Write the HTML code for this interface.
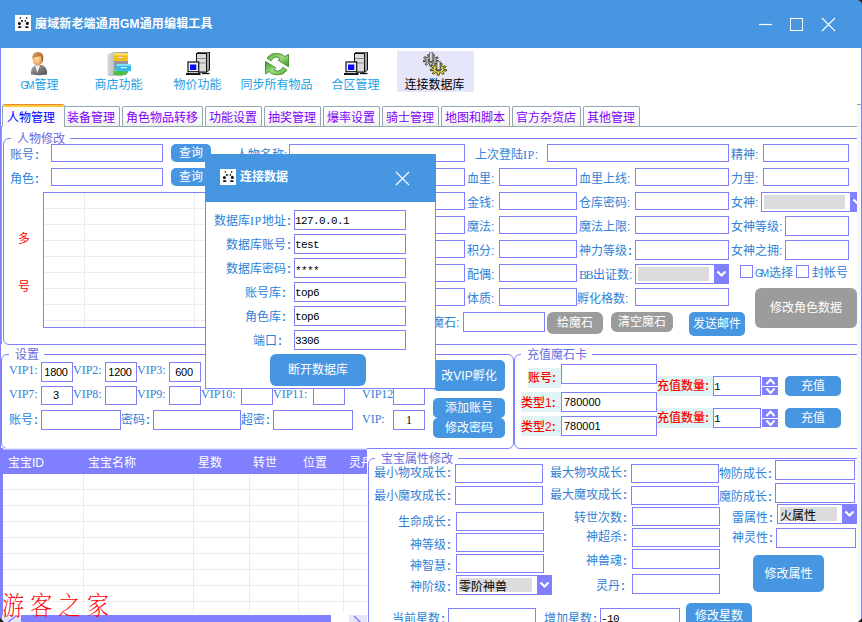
<!DOCTYPE html><html><head><meta charset="utf-8"><title>GM</title><style>
*{box-sizing:content-box;margin:0;padding:0}
html,body{width:862px;height:622px;overflow:hidden;background:#fff}
body{position:relative;font:12px/12px "Liberation Sans","Noto Sans CJK SC",sans-serif;font-weight:400}
div,span,svg{position:absolute}
.lb{color:#2f82d8;white-space:nowrap;height:12px;margin-top:1px}
.c{position:static;font-weight:700;margin-left:1px}
.n{position:static;font-family:"Liberation Serif",serif;font-size:12px;letter-spacing:-1.5px;margin-right:1px}
.g{position:static;font-size:10px;letter-spacing:-2px;margin-right:2px}
.gl{color:#6a6ae0;background:#fff;padding:0 5px 0 6px;white-space:nowrap;height:13px;line-height:13px}
.tb{box-sizing:border-box;border:1px solid #8080ff;background:#fff;color:#000;font-weight:400;white-space:nowrap;overflow:hidden}
.mono{font-family:"Liberation Mono","Noto Sans CJK SC",monospace;font-size:11px;letter-spacing:-0.6px;padding-left:0px;padding-top:1px}
.btn{background:#4696e1;color:#fff;border-radius:5px;text-align:center;white-space:nowrap}
.gbtn{background:#9c9c9c;color:#fff;border-radius:6px;text-align:center;white-space:nowrap}
.gb{border:1px solid #8080ff;border-radius:6px}
.cb{border:1px solid #8080ff;background:#fff}
.cbi{left:2px;top:2px;right:19px;bottom:2px;background:#dcdcdc;color:#000;font-weight:400;padding-left:0px;padding-top:2px;white-space:nowrap;overflow:hidden}
.cbd{right:-1px;top:-1px;bottom:-1px;width:15px;background:#8080ff}
.red{color:#f00;font-weight:500;background:#e0f4f4;white-space:nowrap}
.tab{top:106px;height:19px;border:1px solid #91a7b4;border-bottom:none;border-radius:2px 2px 0 0;background:linear-gradient(#fff,#fafaf9 60%,#f0f0ea);color:#8000ff;line-height:23px;text-align:left;padding-left:3px;white-space:nowrap;font-weight:400}
.tl{color:#1ea0e6;text-align:center;white-space:nowrap;width:77px;top:79px;font-weight:400}
.th{color:#fff;top:7px;white-space:nowrap;font-weight:400}
.vl{width:1px;background:#ececec}
.hl{height:1px;background:#ececec}
</style></head><body>
<div style="left:0;top:0;width:862px;height:48px;background:#4696e1"></div>
<svg style="left:15px;top:15px" width="16" height="16" viewBox="0 0 16 16"><rect width="16" height="16" fill="#fff"/><ellipse cx="8.500" cy="9" rx="2.500" ry="4" fill="#f3f3f8"/><ellipse cx="5.300" cy="2.900" rx=".6" ry="1" fill="#111"/><ellipse cx="11.700" cy="2.900" rx=".7" ry="1" fill="#111"/><ellipse cx="6.900" cy="5.900" rx="1.100" ry=".9" fill="#111"/><ellipse cx="10.400" cy="5.900" rx=".7" ry=".9" fill="#111"/><ellipse cx="4.400" cy="8.600" rx="1.500" ry="1.700" fill="#111"/><ellipse cx="12.400" cy="8.400" rx="1.500" ry="1.600" fill="#111"/><rect x="3" y="11.200" width="3.400" height="1.800" rx=".8" fill="#111"/><rect x="10.200" y="11.200" width="3.400" height="1.800" rx=".8" fill="#111"/></svg>
<span style="left:35px;top:18px;color:#fff;font-weight:700;white-space:nowrap;line-height:13px;letter-spacing:.15px">魔域新老端通用GM通用编辑工具</span>
<svg style="left:755px;top:14px" width="90" height="22" viewBox="0 0 90 22"><path d="M4 10.5h13" stroke="#fff" stroke-width="1.2"/><rect x="35.500" y="4.500" width="12" height="12" fill="none" stroke="#fff" stroke-width="1"/><path d="M67 4l13 13M80 4l-13 13" stroke="#fff" stroke-width="1.1"/></svg>
<svg style="left:856px;top:0" width="6" height="6" viewBox="0 0 6 6"><path d="M1 0h5v5A5 5 0 0 0 1 0z" fill="#222"/></svg>
<div style="left:0;top:48px;width:1px;height:574px;background:#8080ff"></div>
<div style="left:861px;top:48px;width:1px;height:574px;background:#8080ff"></div>
<div style="left:857px;top:105px;width:4px;height:517px;background:#f7f7fc"></div>
<div style="left:397px;top:51px;width:77px;height:41px;background:#e6e6fa"></div>
<span class="tl" style="left:1px;"><span style="position:static;font-size:10px;letter-spacing:-2px;margin-right:2px">GM</span>管理</span>
<span class="tl" style="left:80px;">商店功能</span>
<span class="tl" style="left:159px;">物价功能</span>
<span class="tl" style="left:238px;">同步所有物品</span>
<span class="tl" style="left:317px;">合区管理</span>
<span class="tl" style="left:396px;color:#000;">连接数据库</span>
<svg style="left:27px;top:52px" width="24" height="24" viewBox="0 0 24 24"><defs><radialGradient id="ug" cx=".4" cy=".45" r=".7"><stop offset="0" stop-color="#ffe2b4"/><stop offset=".6" stop-color="#f2b06a"/><stop offset="1" stop-color="#c8702a"/></radialGradient><linearGradient id="uh" x1="0" y1="0" x2="1" y2="1"><stop offset="0" stop-color="#d8a060"/><stop offset=".5" stop-color="#b87a3a"/><stop offset="1" stop-color="#8a5220"/></linearGradient><linearGradient id="ub" x1="0" y1="0" x2="1" y2="1"><stop offset="0" stop-color="#a8a8a8"/><stop offset="1" stop-color="#4e4e4e"/></linearGradient></defs><path d="M4 22.500c-.5-5 1-7.500 5-9.500h6c4 2 5.500 4.500 5 9.500q-8 1.500-16 0z" fill="url(#ub)"/><path d="M8.200 13.500l2 7.500 3-8z" fill="#f2f2f2"/><ellipse cx="10.700" cy="6.900" rx="5.200" ry="6.500" fill="url(#ug)"/><path d="M5.500 6.500c-.5-4 2-6.500 5.500-6.500 4 0 6 3 5.200 7.500-.3 1.800-.8 3-1.700 4 .6-3 .3-5.500-1-7.500-2.500 1-5.500 1-8 2.500z" fill="url(#uh)"/></svg>
<svg style="left:107px;top:52px" width="24" height="24" viewBox="0 0 24 24"><defs><linearGradient id="sg" x1="0" y1="0" x2="1" y2="0"><stop offset="0" stop-color="#d4d8dc"/><stop offset="1" stop-color="#8e959b"/></linearGradient></defs><path d="M.5 2.500l6-2.500h14.500v21l-6 3h-14.500z" fill="url(#sg)"/><rect x="7" y="8" width="14" height="10" fill="#90979d"/><rect x="6.500" y="17.500" width="13" height="5.500" fill="#4fbe3c"/><rect x="6.500" y="17.500" width="13" height="1.500" fill="#8fe07c"/><rect x="6.500" y="1.300" width="14.500" height="7.700" fill="#f6c21a"/><rect x="6.500" y="1.300" width="14.500" height="2" fill="#ffe26a"/><rect x="10.500" y="4.300" width="6.500" height="1.800" fill="#fff4c8" stroke="#b88a10" stroke-width=".4"/><rect x="9.400" y="12" width="14.600" height="7.200" fill="#2cbcf0"/><rect x="9.400" y="12" width="14.600" height="2" fill="#86e0ff"/><rect x="13.500" y="14.800" width="6.500" height="1.800" fill="#d8f6ff" stroke="#1a86b4" stroke-width=".4"/></svg>
<svg style="left:186px;top:52px" width="24" height="24" viewBox="0 0 24 24"><path d="M10.500 1.500l3-1.500h10v18l-3 2h-10z" fill="#a0a0a0" stroke="#111" stroke-width="1"/><rect x="10.500" y="1.500" width="10" height="18.500" fill="#dadada" stroke="#111" stroke-width="1"/><path d="M11 6.500h9.500M11 11h9.500" stroke="#8a8a8a" stroke-width="1"/><rect x="2" y="10" width="10.700" height="9.700" fill="#f2f2f2" stroke="#111" stroke-width="1.200"/><rect x="4" y="12.500" width="6.300" height="5.500" fill="#0a0aff"/><path d="M0 22h14.500" stroke="#111" stroke-width="2"/><rect x="3" y="19.700" width="9" height="1.600" fill="#c8c8c8" stroke="#111" stroke-width=".6"/><path d="M16 21.500h7.500" stroke="#111" stroke-width="1.300"/></svg>
<svg style="left:265px;top:52px" width="24" height="24" viewBox="0 0 24 24"><defs><linearGradient id="yg" x1="0" y1="0" x2="1" y2="1"><stop offset="0" stop-color="#57b23a"/><stop offset=".5" stop-color="#9cdc80"/><stop offset="1" stop-color="#3c9626"/></linearGradient></defs><g fill="url(#yg)" stroke="#2e7d1a" stroke-width=".8" stroke-linejoin="round"><path id="ya" d="M2 6Q6 1 11.500 1.400Q15 1.500 17.600 2.800L19.700 4.600L23.500 2.300V14.700L13.100 8.200L15.200 6.500Q13 5 10.500 5.100Q8 5.300 6.100 8.900Z"/><use href="#ya" transform="rotate(180 12 12.100)"/></g></svg>
<svg style="left:344px;top:52px" width="24" height="24" viewBox="0 0 24 24"><path d="M10.500 1.500l3-1.500h10v18l-3 2h-10z" fill="#a0a0a0" stroke="#111" stroke-width="1"/><rect x="10.500" y="1.500" width="10" height="18.500" fill="#dadada" stroke="#111" stroke-width="1"/><path d="M11 6.500h9.500M11 11h9.500" stroke="#8a8a8a" stroke-width="1"/><rect x="2" y="10" width="10.700" height="9.700" fill="#f2f2f2" stroke="#111" stroke-width="1.200"/><rect x="4" y="12.500" width="6.300" height="5.500" fill="#0a0aff"/><path d="M0 22h14.500" stroke="#111" stroke-width="2"/><rect x="3" y="19.700" width="9" height="1.600" fill="#c8c8c8" stroke="#111" stroke-width=".6"/><path d="M16 21.500h7.500" stroke="#111" stroke-width="1.300"/></svg>
<svg style="left:423px;top:52px" width="24" height="24" viewBox="0 0 24 24"><path d="M12.9 8.3 L15.9 8.8 L15.5 10.2 L12.5 9.8 L11.7 10.7 L13.6 12.5 L12.1 13.4 L10.1 11.6 L8.8 12.0 L8.6 14.3 L6.8 14.2 L6.7 11.9 L5.5 11.5 L3.4 13.2 L1.9 12.3 L3.9 10.5 L3.3 9.6 L0.2 9.9 L-0.1 8.5 L2.9 8.1 L3.2 7.1 L0.6 5.8 L1.6 4.6 L4.3 5.7 L5.4 5.1 L4.5 2.9 L6.3 2.4 L7.3 4.6 L8.7 4.6 L9.9 2.5 L11.7 3.0 L10.6 5.2 L11.7 5.9 L14.4 4.8 L15.3 6.1 L12.7 7.2Z" fill="#c4c4c4" stroke="#3a3a3a" stroke-width="0.9" stroke-linejoin="round"/><ellipse cx="7.900" cy="8.500" rx="3.200" ry="2.300" fill="#555"/><defs><linearGradient id="sh" x1="0" y1="0" x2="1" y2="0"><stop offset="0" stop-color="#7a7a7a"/><stop offset=".4" stop-color="#f4f4f4"/><stop offset="1" stop-color="#6a6a6a"/></linearGradient></defs><rect x="6.200" y="0.300" width="4" height="9" rx="1.200" fill="url(#sh)" stroke="#444" stroke-width=".5"/><path d="M20.5 17.2 L23.7 17.7 L23.3 19.1 L20.1 18.7 L19.4 19.6 L21.3 21.5 L19.8 22.4 L17.7 20.6 L16.3 20.9 L16.2 23.3 L14.2 23.2 L14.2 20.9 L12.9 20.5 L10.7 22.2 L9.2 21.3 L11.3 19.5 L10.6 18.5 L7.4 18.8 L7.1 17.4 L10.3 17.0 L10.5 15.9 L7.9 14.7 L8.9 13.4 L11.7 14.6 L12.8 13.9 L11.8 11.7 L13.7 11.2 L14.8 13.4 L16.2 13.5 L17.5 11.3 L19.3 11.8 L18.2 14.0 L19.3 14.7 L22.2 13.7 L23.1 14.9 L20.3 16.1Z" fill="#f2e640" stroke="#3a3408" stroke-width="0.9" stroke-linejoin="round"/><ellipse cx="15.400" cy="17.300" rx="3.200" ry="2.300" fill="#555"/><rect x="13.700" y="9.200" width="4" height="8.500" rx="1.200" fill="url(#sh)" stroke="#444" stroke-width=".5"/></svg>
<div style="left:1px;top:126px;width:856px;height:1px;background:#91a7b4"></div>
<div style="left:1px;top:126px;width:1px;height:218px;background:#91a7b4"></div>
<div style="left:857px;top:104px;width:5px;height:1px;background:#91a7b4"></div>
<div class="tab" style="left:63px;width:52px">装备管理</div>
<div class="tab" style="left:122px;width:76px">角色物品转移</div>
<div class="tab" style="left:205px;width:52px">功能设置</div>
<div class="tab" style="left:264px;width:52px">抽奖管理</div>
<div class="tab" style="left:323px;width:52px">爆率设置</div>
<div class="tab" style="left:382px;width:52px">骑士管理</div>
<div class="tab" style="left:441px;width:64px">地图和脚本</div>
<div class="tab" style="left:512px;width:64px">官方杂货店</div>
<div class="tab" style="left:583px;width:52px">其他管理</div>
<div style="left:2px;top:104px;width:61px;height:23px;border:1px solid #91a7b4;border-bottom:none;border-top:none;background:#fcfcfe;border-radius:3px 3px 0 0;overflow:hidden"><div style="left:0;top:0;width:61px;height:1px;background:#e68b2c"></div><div style="left:0;top:1px;width:61px;height:2px;background:#ffc73c"></div><span style="left:4px;top:8px;color:#0000ff;white-space:nowrap;font-weight:400">人物管理</span></div>
<div id="pg" style="left:1px;top:127px;width:856px;height:495px;overflow:hidden">
<div style="left:-1px;top:-127px;width:862px;height:622px">
<div class="gb" style="left:3px;top:138px;width:869px;height:205px;"></div>
<span class="gl" style="left:11px;top:133px;">人物修改</span>
<span class="lb" style="left:10px;top:148px;">账号<b class="c">:</b></span>
<div class="tb" style="left:51px;top:144px;width:112px;height:18px;line-height:16px;"></div>
<div class="btn" style="left:171px;top:144px;width:40px;height:18px;line-height:19px;">查询</div>
<span class="lb" style="left:236px;top:148px;">人物名称:</span>
<div class="tb" style="left:289px;top:144px;width:176px;height:18px;line-height:16px;"></div>
<span class="lb" style="left:475px;top:148px;">上次登陆<span class="n" style="letter-spacing:.6px;margin-right:0">IP</span>:</span>
<div class="tb" style="left:547px;top:144px;width:182px;height:18px;line-height:16px;"></div>
<span class="lb" style="left:731px;top:148px;">精神:</span>
<div class="tb" style="left:763px;top:144px;width:86px;height:18px;line-height:16px;"></div>
<span class="lb" style="left:10px;top:172px;">角色<b class="c">:</b></span>
<div class="tb" style="left:51px;top:168px;width:112px;height:18px;line-height:16px;"></div>
<div class="btn" style="left:171px;top:168px;width:40px;height:18px;line-height:19px;">查询</div>
<div class="tb" style="left:289px;top:168px;width:176px;height:18px;line-height:16px;"></div>
<div class="tb" style="left:289px;top:192px;width:176px;height:18px;line-height:16px;"></div>
<div class="tb" style="left:289px;top:216px;width:176px;height:18px;line-height:16px;"></div>
<div class="tb" style="left:289px;top:240px;width:176px;height:18px;line-height:16px;"></div>
<div class="tb" style="left:289px;top:264px;width:176px;height:18px;line-height:16px;"></div>
<div class="tb" style="left:289px;top:288px;width:176px;height:18px;line-height:16px;"></div>
<span class="lb" style="left:467px;top:172px;">血里:</span>
<div class="tb" style="left:499px;top:168px;width:78px;height:18px;line-height:16px;"></div>
<span class="lb" style="left:579px;top:172px;">血里上线:</span>
<div class="tb" style="left:635px;top:168px;width:94px;height:18px;line-height:16px;"></div>
<span class="lb" style="left:467px;top:196px;">金钱:</span>
<div class="tb" style="left:499px;top:192px;width:78px;height:18px;line-height:16px;"></div>
<span class="lb" style="left:579px;top:196px;">仓库密码:</span>
<div class="tb" style="left:635px;top:192px;width:94px;height:18px;line-height:16px;"></div>
<span class="lb" style="left:467px;top:220px;">魔法:</span>
<div class="tb" style="left:499px;top:216px;width:78px;height:18px;line-height:16px;"></div>
<span class="lb" style="left:579px;top:220px;">魔法上限:</span>
<div class="tb" style="left:635px;top:216px;width:94px;height:18px;line-height:16px;"></div>
<span class="lb" style="left:467px;top:244px;">积分:</span>
<div class="tb" style="left:499px;top:240px;width:78px;height:18px;line-height:16px;"></div>
<span class="lb" style="left:579px;top:244px;">神力等级<b class="c">:</b></span>
<div class="tb" style="left:635px;top:240px;width:94px;height:20px;line-height:18px;"></div>
<span class="lb" style="left:467px;top:268px;">配偶:</span>
<div class="tb" style="left:499px;top:264px;width:78px;height:18px;line-height:16px;"></div>
<span class="lb" style="left:579px;top:268px;"><span class="n">BB</span>出证数:</span>
<span class="lb" style="left:467px;top:292px;">体质:</span>
<div class="tb" style="left:499px;top:288px;width:78px;height:18px;line-height:16px;"></div>
<span class="lb" style="left:577px;top:292px;">孵化格数:</span>
<div class="tb" style="left:635px;top:288px;width:94px;height:18px;line-height:16px;"></div>
<div class="cb" style="left:635px;top:264px;width:92px;height:18px;"><div class="cbi" style="line-height:14px"></div><div class="cbd"><svg width="15" height="20" viewBox="0 0 15 20"><path d="M3.500 7.5 L7.500 11.5 L11.500 7.5" fill="none" stroke="#fff" stroke-width="2.200"/></svg></div></div>
<span class="lb" style="left:731px;top:172px;">力里:</span>
<div class="tb" style="left:763px;top:168px;width:86px;height:18px;line-height:16px;"></div>
<span class="lb" style="left:731px;top:196px;">女神:</span>
<div class="cb" style="left:761px;top:192px;width:102px;height:18px;"><div class="cbi" style="line-height:14px"></div><div class="cbd"><svg width="15" height="20" viewBox="0 0 15 20"><path d="M3.500 7.5 L7.500 11.5 L11.500 7.5" fill="none" stroke="#fff" stroke-width="2.200"/></svg></div></div>
<span class="lb" style="left:731px;top:220px;">女神等级:</span>
<div class="tb" style="left:785px;top:216px;width:64px;height:20px;line-height:18px;"></div>
<span class="lb" style="left:731px;top:244px;">女神之拥:</span>
<div class="tb" style="left:785px;top:240px;width:64px;height:20px;line-height:18px;"></div>
<div class="tb" style="left:740px;top:265px;width:13px;height:13px;line-height:11px;"></div>
<span class="lb" style="left:755px;top:266px;"><span class="g">GM</span>选择</span>
<div class="tb" style="left:796px;top:265px;width:13px;height:13px;line-height:11px;"></div>
<span class="lb" style="left:812px;top:266px;">封帐号</span>
<div class="gbtn" style="left:755px;top:288px;width:102px;height:40px;line-height:41px;">修改角色数据</div>
<span class="lb" style="left:432px;top:316px;">魔石:</span>
<div class="tb" style="left:463px;top:312px;width:82px;height:20px;line-height:18px;"></div>
<div class="gbtn" style="left:547px;top:312px;width:56px;height:22px;line-height:23px;">给魔石</div>
<div class="gbtn" style="left:611px;top:312px;width:62px;height:20px;line-height:21px;">清空魔石</div>
<div class="btn" style="left:689px;top:312px;width:56px;height:24px;line-height:25px;">发送邮件</div>
<div class="tb" style="left:43px;top:192px;width:232px;height:136px;">
<div class="hl" style="left:0;top:15px;width:230px"></div>
<div class="hl" style="left:0;top:31px;width:230px"></div>
<div class="hl" style="left:0;top:47px;width:230px"></div>
<div class="hl" style="left:0;top:63px;width:230px"></div>
<div class="hl" style="left:0;top:79px;width:230px"></div>
<div class="hl" style="left:0;top:95px;width:230px"></div>
<div class="hl" style="left:0;top:111px;width:230px"></div>
<div class="hl" style="left:0;top:127px;width:230px"></div>
<div class="vl" style="left:40px;top:0;height:134px"></div>
<div class="vl" style="left:150px;top:0;height:134px"></div>
</div>
<span class="lb" style="left:18px;top:232px;color:#f00;font-weight:400">多</span>
<span class="lb" style="left:18px;top:280px;color:#f00;font-weight:400">号</span>
<div class="gb" style="left:1px;top:354px;width:511px;height:93px;"></div>
<span class="gl" style="left:9px;top:349px;">设置</span>
<span class="lb" style="left:9px;top:363px;font-family:'Liberation Serif',serif">VIP1:</span>
<div class="tb" style="left:41px;top:362px;width:32px;height:20px;line-height:18px;text-align:center;font-size:11px;letter-spacing:-0.3px;padding-right:2px">1800</div>
<span class="lb" style="left:73px;top:363px;font-family:'Liberation Serif',serif">VIP2:</span>
<div class="tb" style="left:105px;top:362px;width:32px;height:20px;line-height:18px;text-align:center;font-size:11px;letter-spacing:-0.3px;padding-right:2px">1200</div>
<span class="lb" style="left:137px;top:363px;font-family:'Liberation Serif',serif">VIP3:</span>
<div class="tb" style="left:169px;top:362px;width:32px;height:20px;line-height:18px;text-align:center;font-size:11px;letter-spacing:-0.3px;padding-right:2px">600</div>
<span class="lb" style="left:9px;top:387px;font-family:'Liberation Serif',serif">VIP7:</span>
<div class="tb" style="left:41px;top:386px;width:32px;height:19px;line-height:17px;text-align:center;font-size:11px;letter-spacing:-0.3px;padding-right:2px">3</div>
<span class="lb" style="left:73px;top:387px;font-family:'Liberation Serif',serif">VIP8:</span>
<div class="tb" style="left:105px;top:386px;width:32px;height:19px;line-height:17px;text-align:center;font-size:11px;letter-spacing:-0.3px;padding-right:2px"></div>
<span class="lb" style="left:137px;top:387px;font-family:'Liberation Serif',serif">VIP9:</span>
<div class="tb" style="left:169px;top:386px;width:32px;height:19px;line-height:17px;text-align:center;font-size:11px;letter-spacing:-0.3px;padding-right:2px"></div>
<span class="lb" style="left:201px;top:387px;font-family:'Liberation Serif',serif">VIP10:</span>
<div class="tb" style="left:241px;top:386px;width:32px;height:19px;line-height:17px;text-align:center;font-size:11px;letter-spacing:-0.3px;padding-right:2px"></div>
<span class="lb" style="left:273px;top:387px;font-family:'Liberation Serif',serif">VIP11:</span>
<div class="tb" style="left:313px;top:386px;width:32px;height:19px;line-height:17px;text-align:center;font-size:11px;letter-spacing:-0.3px;padding-right:2px"></div>
<span class="lb" style="left:362px;top:387px;font-family:'Liberation Serif',serif">VIP12</span>
<div class="tb" style="left:393px;top:386px;width:32px;height:19px;line-height:17px;text-align:center;font-size:11px;letter-spacing:-0.3px;padding-right:2px"></div>
<span class="lb" style="left:9px;top:413px;">账号<b class="c">:</b></span>
<div class="tb" style="left:41px;top:410px;width:80px;height:20px;line-height:18px;"></div>
<span class="lb" style="left:121px;top:413px;">密码<b class="c">:</b></span>
<div class="tb" style="left:153px;top:410px;width:88px;height:20px;line-height:18px;"></div>
<span class="lb" style="left:241px;top:413px;">超密<b class="c">:</b></span>
<div class="tb" style="left:273px;top:410px;width:80px;height:20px;line-height:18px;"></div>
<span class="lb" style="left:362px;top:412px;font-family:'Liberation Serif',serif">VIP:</span>
<div class="tb" style="left:393px;top:410px;width:32px;height:20px;line-height:18px;text-align:center;font-family:'Liberation Serif',serif">1</div>
<div class="btn" style="left:433px;top:360px;width:72px;height:31px;line-height:32px;">改VIP孵化</div>
<div class="btn" style="left:433px;top:398px;width:72px;height:20px;line-height:21px;">添加账号</div>
<div class="btn" style="left:433px;top:418px;width:72px;height:20px;line-height:21px;">修改密码</div>
<div class="gb" style="left:514px;top:354px;width:359px;height:93px;"></div>
<span class="gl" style="left:521px;top:349px;">充值魔石卡</span>
<span class="red" style="left:528px;top:368px;height:20px;line-height:21px;width:33px">账号<b class="c" style="margin-left:0">:</b></span>
<div class="tb" style="left:561px;top:364px;width:96px;height:20px;line-height:18px;"></div>
<span class="red" style="left:521px;top:392px;height:20px;line-height:23px;width:40px">类型1<b class="c" style="margin-left:0">:</b></span>
<div class="tb" style="left:561px;top:392px;width:96px;height:20px;line-height:18px;padding-left:2px;font-size:11px">780000</div>
<span class="red" style="left:521px;top:416px;height:20px;line-height:23px;width:40px">类型2<b class="c" style="margin-left:0">:</b></span>
<div class="tb" style="left:561px;top:416px;width:96px;height:20px;line-height:18px;padding-left:2px;font-size:11px">780001</div>
<span class="red" style="left:657px;top:376px;height:20px;line-height:20px;width:56px">充值数量<b class="c" style="margin-left:0">:</b></span>
<div class="tb mono" style="left:713px;top:376px;width:48px;height:20px;line-height:18px;">1</div>
<svg style="left:762px;top:377px" width="16" height="18" viewBox="0 0 16 18"><rect width="16" height="9" fill="#8080ff"/><rect y="10" width="16" height="8" fill="#8080ff"/><path d="M4.500 7l4-4.500 4 4.500M4.500 11.500l4 4.500 4-4.500" fill="none" stroke="#fff" stroke-width="2"/></svg>
<div class="btn" style="left:785px;top:376px;width:56px;height:20px;line-height:21px;">充值</div>
<span class="red" style="left:657px;top:408px;height:20px;line-height:20px;width:56px">充值数量<b class="c" style="margin-left:0">:</b></span>
<div class="tb mono" style="left:713px;top:408px;width:48px;height:20px;line-height:18px;">1</div>
<svg style="left:762px;top:409px" width="16" height="18" viewBox="0 0 16 18"><rect width="16" height="9" fill="#8080ff"/><rect y="10" width="16" height="8" fill="#8080ff"/><path d="M4.500 7l4-4.500 4 4.500M4.500 11.500l4 4.500 4-4.500" fill="none" stroke="#fff" stroke-width="2"/></svg>
<div class="btn" style="left:785px;top:408px;width:56px;height:20px;line-height:21px;">充值</div>
<div style="left:2px;top:448px;width:365px;height:1px;background:#e4e4ff"></div><div style="left:2px;top:449px;width:365px;height:1px;background:#b4b4ff"></div>
<div style="left:2px;top:450px;width:365px;height:24px;background:#8080ff">
<span class="th" style="left:6px">宝宝ID</span>
<span class="th" style="left:86px">宝宝名称</span>
<span class="th" style="left:196px">星数</span>
<span class="th" style="left:251px">转世</span>
<span class="th" style="left:301px">位置</span>
<span class="th" style="left:347px">灵丹</span>
</div>
<div class="hl" style="left:3px;top:489px;width:364px"></div>
<div class="hl" style="left:3px;top:505px;width:364px"></div>
<div class="hl" style="left:3px;top:521px;width:364px"></div>
<div class="hl" style="left:3px;top:537px;width:364px"></div>
<div class="hl" style="left:3px;top:553px;width:364px"></div>
<div class="hl" style="left:3px;top:569px;width:364px"></div>
<div class="hl" style="left:3px;top:585px;width:364px"></div>
<div class="hl" style="left:3px;top:601px;width:364px"></div>
<div class="vl" style="left:83px;top:474px;height:139px"></div>
<div class="vl" style="left:193px;top:474px;height:139px"></div>
<div class="vl" style="left:249px;top:474px;height:139px"></div>
<div class="vl" style="left:298px;top:474px;height:139px"></div>
<div class="vl" style="left:343px;top:474px;height:139px"></div>
<div style="left:1px;top:448px;width:2px;height:174px;background:#8080ff"></div>
<div style="left:2px;top:615px;width:19px;height:7px;background:#e6e6fa"></div>
<div style="left:21px;top:615px;width:310px;height:7px;background:#8080ff"></div>
<div style="left:349px;top:615px;width:18px;height:7px;background:#e6e6fa"></div>
<svg style="left:349px;top:615px" width="18" height="7" viewBox="0 3 18 7"><path d="M5 4l6 6-3 6" fill="none" stroke="#8080ff" stroke-width="1.500"/></svg>
<svg style="left:2px;top:612px" width="19" height="10" viewBox="0 0 19 10"><path d="M14 4l-8 6" fill="none" stroke="#8080ff" stroke-width="1.500"/></svg>
<span style="left:2px;top:593px;color:#f00;font:200 22px/24px 'Liberation Serif','Noto Serif CJK SC',serif;letter-spacing:6.300px;transform:scaleY(1.18);transform-origin:0 0;white-space:nowrap">游客之家</span>
<div style="left:367px;top:449px;width:2px;height:173px;background:#fff"></div>
<div class="gb" style="left:368px;top:458px;width:499px;height:199px;"></div>
<span class="gl" style="left:375px;top:453px;">宝宝属性修改</span>
<span class="lb" style="left:374px;top:466px;">最小物攻成长<b class="c">:</b></span>
<div class="tb" style="left:455px;top:464px;width:88px;height:19px;line-height:17px;"></div>
<span class="lb" style="left:374px;top:489px;">最小魔攻成长<b class="c">:</b></span>
<div class="tb" style="left:455px;top:486px;width:88px;height:19px;line-height:17px;"></div>
<span class="lb" style="left:398px;top:515px;">生命成长<b class="c">:</b></span>
<div class="tb" style="left:456px;top:512px;width:88px;height:19px;line-height:17px;"></div>
<span class="lb" style="left:410px;top:538px;">神等级<b class="c">:</b></span>
<div class="tb" style="left:456px;top:533px;width:88px;height:19px;line-height:17px;"></div>
<span class="lb" style="left:410px;top:559px;">神智慧<b class="c">:</b></span>
<div class="tb" style="left:456px;top:554px;width:88px;height:19px;line-height:17px;"></div>
<span class="lb" style="left:410px;top:580px;">神阶级<b class="c">:</b></span>
<div class="cb" style="left:456px;top:575px;width:94px;height:18px;"><div class="cbi" style="line-height:14px">零阶神兽</div><div class="cbd"><svg width="15" height="20" viewBox="0 0 15 20"><path d="M3.500 7.5 L7.500 11.5 L11.500 7.5" fill="none" stroke="#fff" stroke-width="2.200"/></svg></div></div>
<span class="lb" style="left:392px;top:612px;">当前星数<b class="c">:</b></span>
<div class="tb" style="left:448px;top:608px;width:88px;height:20px;line-height:18px;"></div>
<span class="lb" style="left:550px;top:466px;">最大物攻成长<b class="c">:</b></span>
<div class="tb" style="left:631px;top:464px;width:88px;height:19px;line-height:17px;"></div>
<span class="lb" style="left:550px;top:488px;">最大魔攻成长<b class="c">:</b></span>
<div class="tb" style="left:631px;top:486px;width:88px;height:19px;line-height:17px;"></div>
<span class="lb" style="left:574px;top:511px;">转世次数<b class="c">:</b></span>
<div class="tb" style="left:632px;top:507px;width:88px;height:19px;line-height:17px;"></div>
<span class="lb" style="left:586px;top:530px;">神超杀<b class="c">:</b></span>
<div class="tb" style="left:632px;top:528px;width:88px;height:19px;line-height:17px;"></div>
<span class="lb" style="left:586px;top:554px;">神兽魂<b class="c">:</b></span>
<div class="tb" style="left:632px;top:549px;width:88px;height:20px;line-height:18px;"></div>
<span class="lb" style="left:596px;top:579px;">灵丹<b class="c">:</b></span>
<div class="tb" style="left:632px;top:574px;width:88px;height:20px;line-height:18px;"></div>
<span class="lb" style="left:544px;top:612px;">增加星数<b class="c">:</b></span>
<div class="tb mono" style="left:600px;top:608px;width:80px;height:20px;line-height:18px;">-10</div>
<div class="btn" style="left:686px;top:603px;width:66px;height:30px;line-height:31px;line-height:26px">修改星数</div>
<span class="lb" style="left:719px;top:467px;">物防成长<b class="c">:</b></span>
<div class="tb" style="left:775px;top:460px;width:80px;height:20px;line-height:18px;"></div>
<span class="lb" style="left:719px;top:490px;">魔防成长<b class="c">:</b></span>
<div class="tb" style="left:775px;top:483px;width:80px;height:20px;line-height:18px;"></div>
<span class="lb" style="left:732px;top:511px;">雷属性<b class="c">:</b></span>
<div class="cb" style="left:777px;top:504px;width:78px;height:18px;"><div class="cbi" style="line-height:14px">火属性</div><div class="cbd"><svg width="15" height="20" viewBox="0 0 15 20"><path d="M3.500 7.5 L7.500 11.5 L11.500 7.5" fill="none" stroke="#fff" stroke-width="2.200"/></svg></div></div>
<span class="lb" style="left:732px;top:531px;">神灵性<b class="c">:</b></span>
<div class="tb" style="left:776px;top:528px;width:80px;height:20px;line-height:18px;"></div>
<div class="btn" style="left:753px;top:555px;width:71px;height:37px;line-height:38px;">修改属性</div>
</div></div>
<div style="left:205px;top:154px;width:229px;height:234px;background:#fff;border:1px solid #8080ff;border-top:none"></div>
<div style="left:205px;top:154px;width:231px;height:48px;background:#4696e1"></div>
<svg style="left:220px;top:169px" width="16" height="16" viewBox="0 0 16 16"><rect width="16" height="16" fill="#fff"/><ellipse cx="8.500" cy="9" rx="2.500" ry="4" fill="#f3f3f8"/><ellipse cx="5.300" cy="2.900" rx=".6" ry="1" fill="#111"/><ellipse cx="11.700" cy="2.900" rx=".7" ry="1" fill="#111"/><ellipse cx="6.900" cy="5.900" rx="1.100" ry=".9" fill="#111"/><ellipse cx="10.400" cy="5.900" rx=".7" ry=".9" fill="#111"/><ellipse cx="4.400" cy="8.600" rx="1.500" ry="1.700" fill="#111"/><ellipse cx="12.400" cy="8.400" rx="1.500" ry="1.600" fill="#111"/><rect x="3" y="11.200" width="3.400" height="1.800" rx=".8" fill="#111"/><rect x="10.200" y="11.200" width="3.400" height="1.800" rx=".8" fill="#111"/></svg>
<span style="left:240px;top:171px;color:#fff;font-weight:700;white-space:nowrap;line-height:13px">连接数据</span>
<svg style="left:395px;top:171px" width="16" height="16" viewBox="0 0 16 16"><path d="M1 1l13 13M14 1L1 14" stroke="#fff" stroke-width="1.100"/></svg>
<span class="lb" style="left:214px;top:214px;">数据库<span class="n" style="letter-spacing:.6px;margin-right:0">IP</span>地址<b class="c">:</b></span>
<div class="tb mono" style="left:294px;top:210px;width:112px;height:20px;line-height:18px;">127.0.0.1</div>
<span class="lb" style="left:226px;top:238px;">数据库账号<b class="c">:</b></span>
<div class="tb mono" style="left:294px;top:234px;width:112px;height:20px;line-height:18px;">test</div>
<span class="lb" style="left:226px;top:262px;">数据库密码<b class="c">:</b></span>
<div class="tb mono" style="left:294px;top:258px;width:112px;height:20px;line-height:18px;"><span style="position:relative;top:2px">****</span></div>
<span class="lb" style="left:245px;top:286px;">账号库<b class="c">:</b></span>
<div class="tb mono" style="left:294px;top:282px;width:112px;height:20px;line-height:18px;">top6</div>
<span class="lb" style="left:245px;top:310px;">角色库<b class="c">:</b></span>
<div class="tb mono" style="left:294px;top:306px;width:112px;height:20px;line-height:18px;">top6</div>
<span class="lb" style="left:253px;top:334px;">端口<b class="c">:</b></span>
<div class="tb mono" style="left:294px;top:330px;width:112px;height:20px;line-height:18px;">3306</div>
<div class="btn" style="left:270px;top:354px;width:96px;height:32px;line-height:33px;border-radius:6px">断开数据库</div>
<svg style="left:858px;top:618px" width="4" height="4" viewBox="0 0 4 4"><path d="M4 0v4h-4z" fill="#222"/></svg><svg style="left:0;top:618px" width="4" height="4" viewBox="0 0 4 4"><path d="M0 0v4h4z" fill="#222"/></svg>
</body></html>
